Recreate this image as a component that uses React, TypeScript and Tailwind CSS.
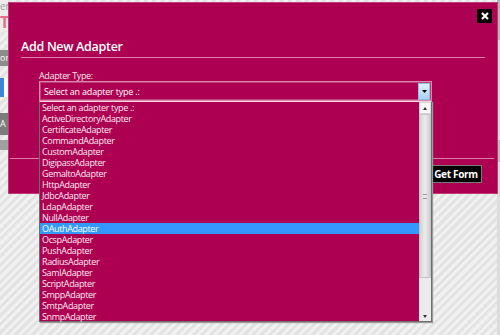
const adapters = [
  "Select an adapter type .:",
  "ActiveDirectoryAdapter",
  "CertificateAdapter",
  "CommandAdapter",
  "CustomAdapter",
  "DigipassAdapter",
  "GemaltoAdapter",
  "HttpAdapter",
  "JdbcAdapter",
  "LdapAdapter",
  "NullAdapter",
  "OAuthAdapter",
  "OcspAdapter",
  "PushAdapter",
  "RadiusAdapter",
  "SamlAdapter",
  "ScriptAdapter",
  "SmppAdapter",
  "SmtpAdapter",
  "SnmpAdapter",
];

export default function App() {
  return (
    <div className="relative h-[335px] w-[500px] overflow-hidden bg-[repeating-linear-gradient(135deg,#e3e3e3_0px,#e3e3e3_3px,#f1f1f1_3px,#f1f1f1_6px)] font-['Open_Sans',sans-serif]">
      {/* page behind the dialog */}
      <div className="flex w-[8px] flex-col overflow-hidden">
        <div className="h-[13px] bg-[#ececec] text-[10px] leading-[13px] text-[#9a9a9a]">er</div>
        <div className="h-[18px] bg-[#ececec] text-[16px] font-bold leading-[18px] text-[#e0708e]">T</div>
        <div className="h-[19px]" />
        <div className="h-[16px] bg-[#8c8c8c] text-[9px] leading-[16px] text-white">on</div>
        <div className="h-[12px]" />
        <div className="flex h-[19px]">
          <div className="w-[4px] bg-[#3b87d6]" />
          <div className="flex-1 bg-white" />
        </div>
        <div className="h-[16px]" />
        <div className="h-[22px] bg-[#7d7d7d] text-[9px] leading-[22px] text-white">A</div>
        <div className="h-[5px]" />
        <div className="h-[10px] bg-[#a0a0a0]" />
      </div>

      {/* page scrollbar */}
      <div className="absolute right-0 top-0 flex h-full w-[3px] flex-col bg-[#dcdcdc]">
        <div className="h-[40px] bg-[#b4b4b4]" />
        <div className="h-[100px]" />
        <div className="h-[22px] bg-[#bdbdbd]" />
      </div>

      {/* dialog */}
      <div className="absolute left-[8px] top-[2px] flex h-[192px] w-[490px] flex-col border border-[#c23a74] bg-[#ae0052]">
        <button className="absolute right-[5px] top-[6px] flex h-[14px] w-[15px] items-center justify-center bg-black">
          <svg width="8" height="8" viewBox="0 0 8 8">
            <path d="M1 1 L7 7 M7 1 L1 7" stroke="white" strokeWidth="2.2" />
          </svg>
        </button>

        <h2 className="ml-[12px] mt-[35px] text-[12.5px] font-semibold leading-[18px] tracking-[-0.3px] text-white">
          Add New Adapter
        </h2>
        <div className="ml-[12px] mr-[12px] mt-px h-px bg-[#e07fa9]" />

        <div className="ml-[30px] mt-[12px] w-[393px]">
          <div className="text-[9px] leading-[11px] tracking-[-0.35px] text-[#f6e3ec]">Adapter Type:</div>
          <div className="relative">
            <div className="flex h-[20px] items-center border border-[#dc86ad] bg-[#ae0052] shadow-[inset_0_0_0_1px_#c0417a]">
              <span className="flex-1 pl-[4px] text-[9px] leading-[11px] tracking-[-0.2px] text-white">
                Select an adapter type .:
              </span>
              <div className="mr-px flex h-[17px] w-[12px] items-center justify-center border border-[#8fbfe3] bg-[linear-gradient(#e2f2fc,#a6d2f2)]">
                <svg width="5" height="3" viewBox="0 0 5 3">
                  <path d="M0 0 H5 L2.5 3 Z" fill="black" />
                </svg>
              </div>
            </div>

            {/* open dropdown list */}
            <div className="absolute left-0 top-[20px] z-10 flex h-[221px] w-[393px] border border-[#6e6e6e] border-t-[#f2d6e3] bg-[#ae0052] shadow-[1px_1px_1px_#9a9a9a]">
              <ul className="flex-1">
                {adapters.map((a) => (
                  <li
                    key={a}
                    className={
                      a === "OAuthAdapter"
                        ? "h-[11px] bg-[#3399ff] pl-[2px] text-[9px] leading-[11px] tracking-[-0.35px] text-white"
                        : "h-[11px] pl-[2px] text-[9px] leading-[11px] tracking-[-0.35px] text-[#fbeaf2]"
                    }
                  >
                    {a}
                  </li>
                ))}
              </ul>
              <div className="flex w-[12px] flex-col bg-[#ececec]">
                <div className="flex h-[12px] items-center justify-center border border-[#d6d6d6] bg-[#f7f7f7]">
                  <svg width="4" height="3" viewBox="0 0 4 3">
                    <path d="M0 3 H4 L2 0 Z" fill="#333" />
                  </svg>
                </div>
                <div className="flex h-[164px] items-center justify-center border border-[#c4c4c4] bg-[linear-gradient(90deg,#d2d2d2,#ececec,#cfcfcf)]">
                  <div className="h-[5px] w-[4px] border-y border-[#9a9a9a]" />
                </div>
                <div className="flex-1" />
                <div className="flex h-[9px] items-center justify-center">
                  <svg width="4" height="3" viewBox="0 0 4 3">
                    <path d="M0 0 H4 L2 3 Z" fill="#333" />
                  </svg>
                </div>
              </div>
            </div>
          </div>
        </div>

        <div className="ml-[1px] mr-[3px] mt-[57px] h-px bg-[#dc7ca7]" />
        <div className="mt-[6px] flex justify-end pr-[15px]">
          <button className="h-[18px] w-[52px] border border-[#7a7a7a] bg-black text-[10px] font-bold leading-[16px] tracking-[-0.3px] text-white">
            Get Form
          </button>
        </div>
      </div>
    </div>
  );
}
